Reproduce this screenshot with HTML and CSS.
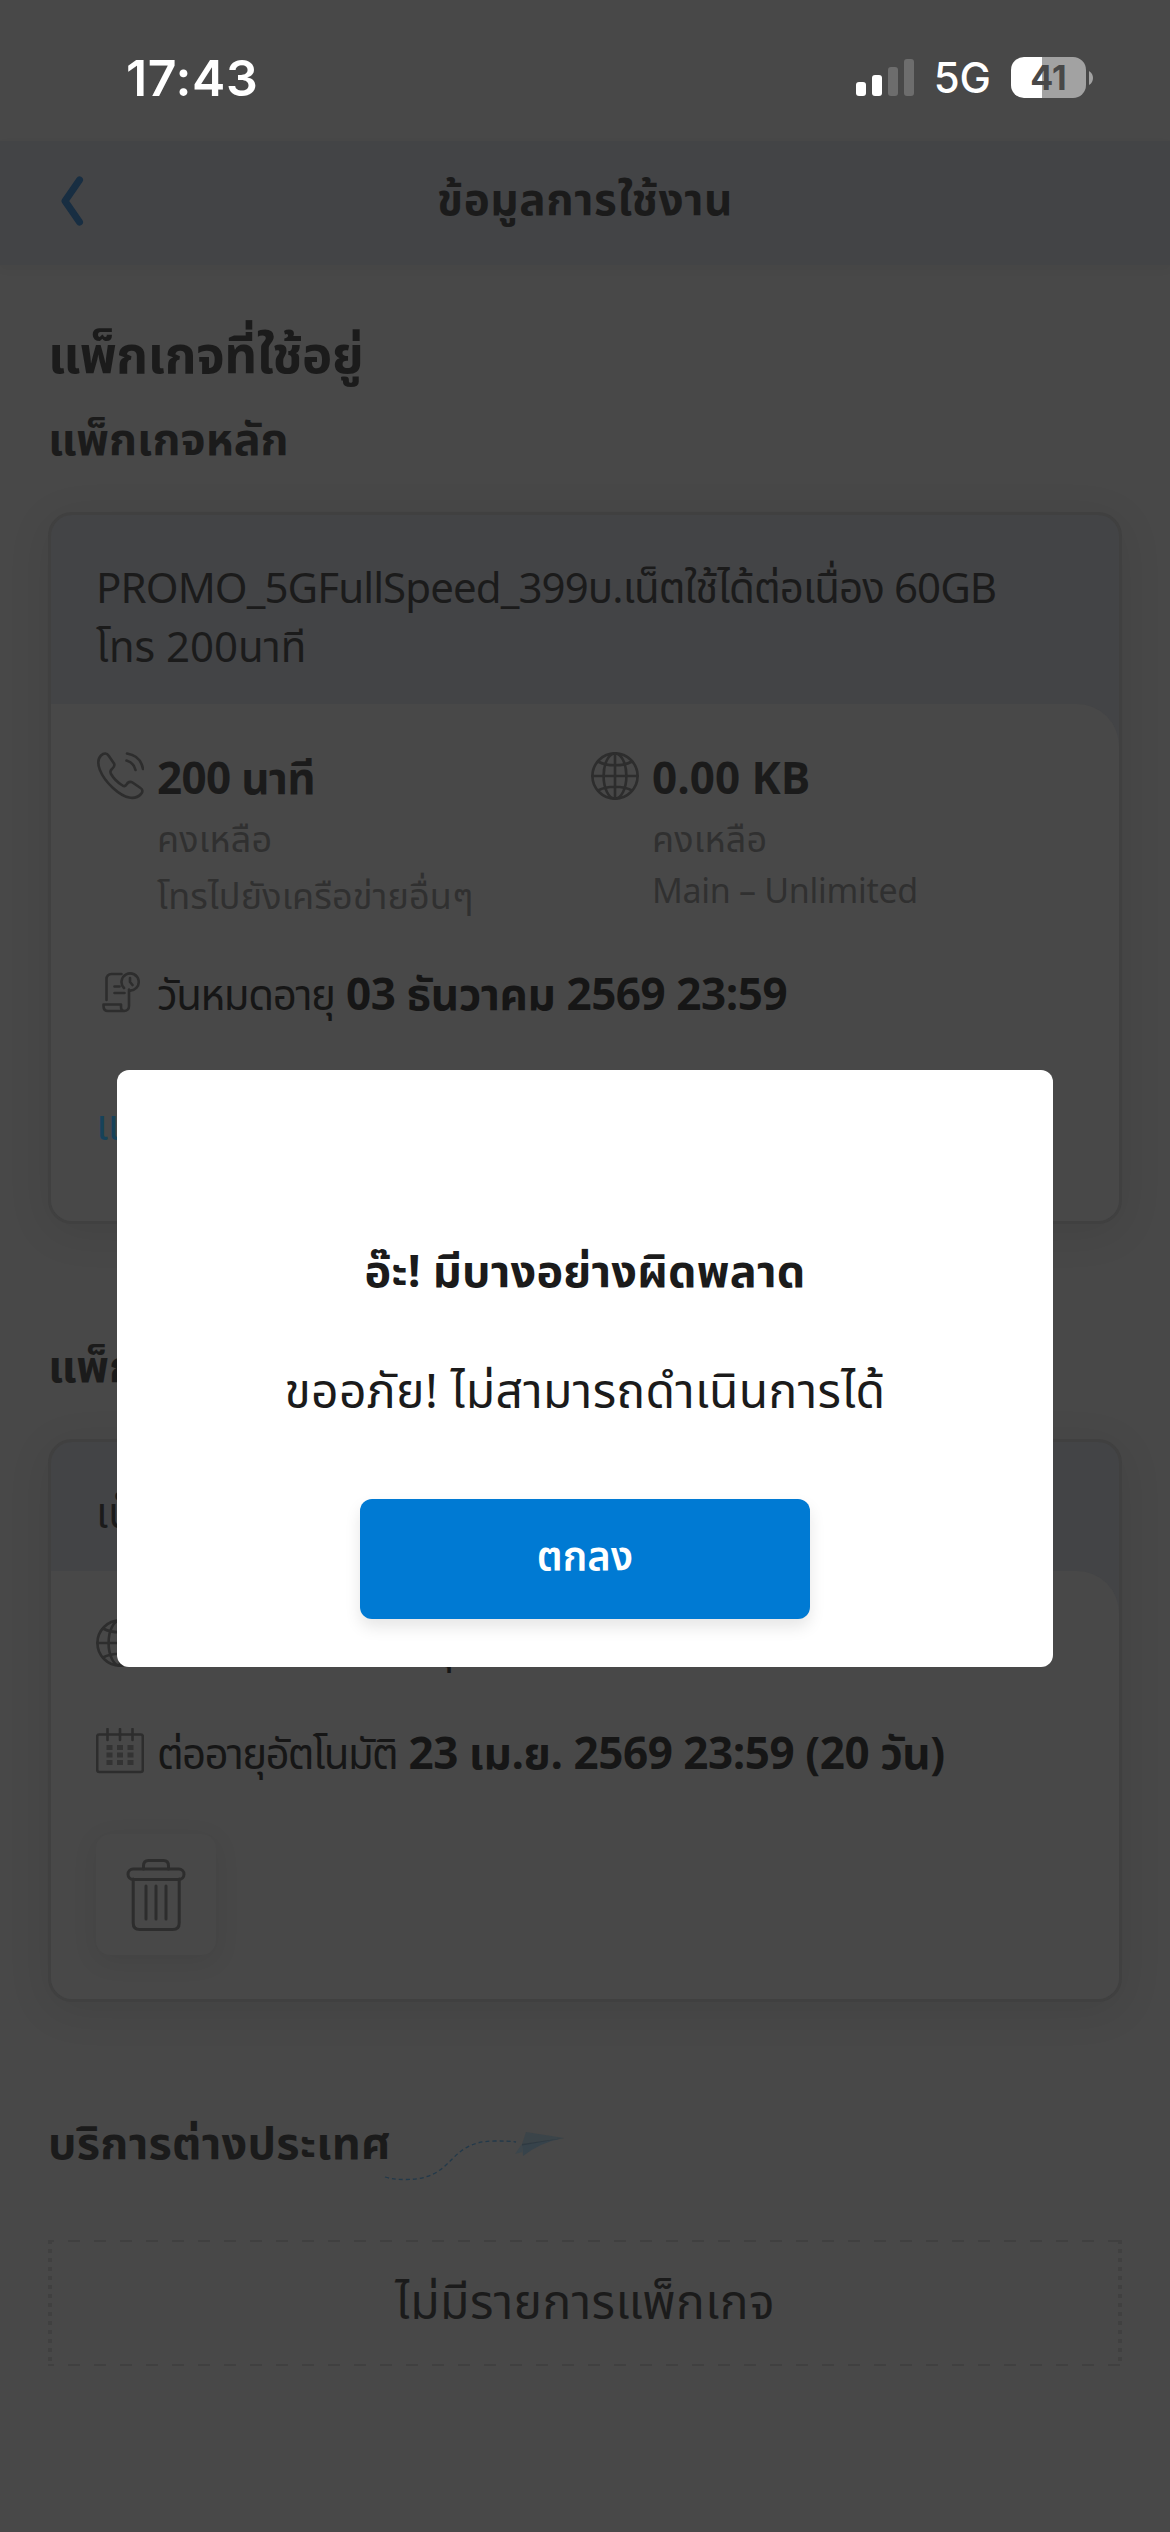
FILE: index.html
```html
<!DOCTYPE html>
<html lang="th">
<head>
<meta charset="utf-8">
<title>ข้อมูลการใช้งาน</title>
<link rel="stylesheet" href="styles.css">
</head>
<body>
<svg class="defs" aria-hidden="true">
  <symbol id="globe" viewBox="0 0 48 48">
    <circle cx="24" cy="24" r="22.6"/><ellipse cx="24" cy="24" rx="11.4" ry="22.6"/>
    <path d="M24 1.4v45.2M1.4 24h45.2M7 9.500c4.500 2.500 10 3.700 17 3.700s12.500-1.200 17-3.700M7 38.500c4.500-2.500 10-3.700 17-3.700s12.500 1.200 17 3.700"/>
  </symbol>
</svg>
<div class="screen">
  <div class="status">
    <span class="time">17:43</span>
    <div class="status-right">
      <svg class="signal" viewBox="0 0 58 37"><rect y="23" width="10" height="14" rx="3" fill="#fff"/><rect x="16" y="16" width="10" height="21" rx="3" fill="#fff"/><rect x="32" y="8" width="10" height="29" rx="3" fill="#6d6d6d"/><rect x="48" width="10" height="37" rx="3" fill="#6d6d6d"/></svg>
      <span class="net">5G</span>
      <span class="battery"><span class="level">41</span></span>
      <svg class="cap" viewBox="0 0 4 14"><path d="M0 0q4 2.500 4 7t-4 7z" fill="#a2a2a2"/></svg>
    </div>
  </div>
  <header class="bar">
    <svg class="back" viewBox="0 0 24 50"><path d="M19.500 4 5 25l14.500 21"/></svg>
    <h1 class="bar-title">ข้อมูลการใช้งาน</h1>
  </header>
  <main class="content">
    <h2 class="page-title">แพ็กเกจที่ใช้อยู่</h2>
    <h3 class="section-title">แพ็กเกจหลัก</h3>
    <section class="card main-card">
      <div class="card-head"><p class="card-name"><span class="plan">PROMO_5GFullSpeed_399บ.เน็ตใช้ได้ต่อเนื่อง 60GB</span><br>โทร 200นาที</p></div>
      <div class="card-body">
        <div class="quotas">
          <div class="quota">
            <svg class="icon" viewBox="0 0 48 48"><path d="M5 3.500C8 .5 11 1 12.500 3.500l5.500 8c1.500 2.500-.5 4-2.500 6-1.500 1.500-1.500 2.500-.5 4.500 3 5 6.500 8.500 11.500 11.500 1.500 1 3 .5 4-1 1.500-2.500 3.500-3.500 6-2l8 5.500c2.500 1.500 2.500 4 .5 6-6 6.500-16 5-28-6C4.500 24.500-1.500 10 5 3.500z"/><path d="M30.500 8.500c5 1.500 8 4.500 9 9.500M31 1.500C40 3 45.500 8.500 47 17"/></svg>
            <div class="quota-text"><p class="amount">200 นาที</p><p class="note">คงเหลือ</p><p class="note">โทรไปยังเครือข่ายอื่นๆ</p></div>
          </div>
          <div class="quota">
            <svg class="icon"><use href="#globe"/></svg>
            <div class="quota-text"><p class="amount data">0.00 KB</p><p class="note">คงเหลือ</p><p class="note latin">Main – Unlimited</p></div>
          </div>
        </div>
        <div class="info expiry">
          <svg class="icon" viewBox="0 0 48 48"><path d="M10.500 28V7c0-3 2-5 5-5h10M18.500 14.500h5M18.500 21h10M33 17.500V34c0 3-2 5-5 5H12c-3 0-4.500-2-4.500-5v-1.500h17.500V35c0 2.500 1.500 4 3.500 4M28 16a8.600 8.600 0 1 1 5 2.500M34 6v4l2.500 3"/></svg>
          <p class="line"><span class="label">วันหมดอายุ</span> <b>03 ธันวาคม 2569 23:59</b></p>
        </div>
        <a class="link" href="#">แบ่งปัน</a>
      </div>
    </section>
    <h3 class="section-title extra">แพ็กเกจเสริม</h3>
    <section class="card extra-card">
      <div class="card-head"><p class="card-name">เน็ตเสริม</p></div>
      <div class="card-body">
        <div class="info usage"><svg class="icon"><use href="#globe"/></svg><p class="line">เหลือ วันหมดอายุ</p></div>
        <div class="info renew">
          <svg class="icon" viewBox="0 0 48 48"><rect x="1.200" y="6.500" width="45.600" height="37.500" rx="2"/><path d="M11.500 1v11M24 1v11M36.500 1v11"/><path class="dots" d="M10.500 19.500h6M21 19.500h6M31.500 19.500h6M10.500 27h6M21 27h6M31.500 27h6M10.500 34.500h6M21 34.500h6M31.500 34.500h6"/></svg>
          <p class="line"><span class="label tight">ต่ออายุอัตโนมัติ</span> <b>23 เม.ย. 2569 23:59 (20 วัน)</b></p>
        </div>
        <button class="trash" aria-label="ลบ"><svg viewBox="0 0 60 74"><path d="M17.500 11V8q0-5.500 5-5.500h15q5 0 5 5.500v3M7.200 21v44q0 6.500 6.500 6.500h33q6.500 0 6.500-6.500V21M20 28v33M30 28v33M40 28v33"/><rect x="2" y="11" width="56" height="10.500" rx="5.200"/></svg></button>
      </div>
    </section>
    <div class="abroad">
      <h3 class="section-title">บริการต่างประเทศ</h3>
      <svg class="plane" viewBox="0 0 182 49"><path class="trail" d="M0 47c7 2 12 2.500 20 2.500C72 50 60 11 110 11c8 0 15 0 21 1"/><path d="M141 2l38 6-42 6z" fill="#3b4449"/><path d="M137 14l42-6q-23 4-41 18z" fill="#37434b"/><path d="M137 14l-7 10 7-2z" fill="#3c464c"/><path d="M137 14l42-6-42 7.500z" fill="#2f3a42"/></svg>
    </div>
    <div class="empty">ไม่มีรายการแพ็กเกจ</div>
  </main>
  <div class="dialog" role="dialog">
    <h2 class="dialog-title">อ๊ะ! มีบางอย่างผิดพลาด</h2>
    <p class="dialog-text">ขออภัย! ไม่สามารถดำเนินการได้</p>
    <button class="ok">ตกลง</button>
  </div>
</div>
</body>
</html>
```
FILE: styles.css
```css
*{box-sizing:border-box}
body,h1,h2,h3,p{margin:0}
body{background:#484848;color:#1b1b1b;font-family:"Noto Sans Thai","Noto Sans",sans-serif}
.defs{position:absolute;width:0;height:0}
.screen{position:relative;width:1170px;height:2532px;overflow:hidden;background:#484848}
svg{fill:none;display:block;flex:none}
.status{height:141px;padding:46px 77px 0 126px;display:flex;justify-content:space-between;color:#fff;font-family:Inter,sans-serif}
.time{font-size:50px;font-weight:600;line-height:64px;letter-spacing:.6px}
.status-right{display:flex;align-items:flex-start}
.signal{width:58px;height:37px;margin-top:13px}
.net{font-size:42px;font-weight:500;line-height:64px;margin-left:20px}
.battery{width:75px;height:41px;margin:11px 0 0 20px;border-radius:13px;background:linear-gradient(90deg,#fff 31px,#a2a2a2 31px);color:#484848;text-align:center}
.level{font-size:34px;font-weight:700;line-height:41px;display:block}
.cap{width:4px;height:14px;margin:25px 0 0 3px}
.bar{position:relative;height:124px;background:#434446;display:flex;justify-content:center;box-shadow:0 4px 10px rgba(0,0,0,.04)}
.back{position:absolute;left:60px;top:35px;width:24px;height:50px;stroke:#182e42;stroke-width:7;stroke-linecap:round;stroke-linejoin:round}
.bar-title{font-size:44px;font-weight:700;line-height:66px;margin-top:28px;letter-spacing:.6px}
.content{padding:0 48px}
.page-title{font-size:51px;font-weight:700;line-height:76px;margin-top:55px;letter-spacing:-.4px}
.section-title{font-size:45px;font-weight:700;line-height:68px;margin-top:11px;white-space:nowrap}
.card{height:712px;margin-top:37px;border:3px solid #404040;border-radius:24px;box-shadow:0 8px 44px rgba(0,0,0,.09);overflow:hidden;background:#434446}
.card-head{height:189px;padding:46px 45px 0}
.card-name{font-size:42px;line-height:59px;white-space:nowrap}
.plan{letter-spacing:-.9px}
.card-body{height:520px;background:#484848;border-radius:0 42px 0 0;padding:48px 45px 0}
.quotas{display:flex}
.quota{display:flex;flex:none;width:495px;gap:13px}
.icon{width:48px;height:48px;stroke:#2d2d2d;stroke-width:2.6;stroke-linecap:round;stroke-linejoin:round}
.dots{stroke-width:5;stroke-linecap:butt;stroke:#333}
.amount{font-size:44px;font-weight:700;line-height:58px;letter-spacing:-.7px;white-space:nowrap}
.data{letter-spacing:0}
.note{font-size:36px;line-height:57px;color:#303030;letter-spacing:.15px;white-space:nowrap}
.amount+.note{margin-top:3px}
.latin{font-size:34px;line-height:45px;letter-spacing:-.3px}
.info{display:flex;gap:13px}
.line{font-size:44px;line-height:64px;color:#161616;white-space:nowrap}
.line b{font-weight:700;letter-spacing:-.45px}
.label{font-size:42px;letter-spacing:-1.4px}
.tight{letter-spacing:-1.7px}
.expiry{margin-top:38px}
.expiry .icon{margin-top:7px}
.link{display:block;font-size:42px;line-height:60px;margin-top:68px;color:#17425a;text-decoration:none}
.extra{margin-top:110px}
.extra-card{height:563px}
.extra-card .card-head{height:129px;padding-top:44px}
.extra-card .card-body{height:431px}
.usage .line{margin-top:-3px}
.renew{margin-top:44px}
.renew .icon{margin-top:4px}
.trash{display:flex;justify-content:center;align-items:center;width:120px;height:121px;margin-top:46px;border:0;border-radius:14px;background:#484848;box-shadow:0 6px 26px rgba(0,0,0,.08)}
.trash svg{width:60px;height:74px;stroke:#2d2d2d;stroke-width:3;stroke-linecap:round}
.abroad{display:flex;margin-top:98px}
.abroad .section-title{width:343px;letter-spacing:.25px}
.plane{width:182px;height:49px;margin:30px 0 0 -6px;overflow:visible}
.trail{stroke:#22394a;stroke-width:1.300;stroke-dasharray:4 3}
.empty{height:126px;margin-top:61px;text-align:center;font-size:48px;line-height:130px;letter-spacing:.4px;background:
  repeating-linear-gradient(90deg,#404040 0 6px,transparent 6px 20px,#404040 20px 26px) 0 0/100% 2px no-repeat,
  repeating-linear-gradient(90deg,#404040 0 6px,transparent 6px 20px,#404040 20px 26px) 0 100%/100% 2px no-repeat,
  repeating-linear-gradient(#404040 0 4px,transparent 4px 9px) 0 0/4px 100% no-repeat,
  repeating-linear-gradient(#404040 0 4px,transparent 4px 9px) 100% 0/4px 100% no-repeat}
.dialog{position:absolute;left:117px;top:1070px;width:936px;height:597px;border-radius:12px;background:#fff;text-align:center;color:#1b1b1b}
.dialog-title{font-size:45px;font-weight:700;line-height:66px;margin-top:170px;letter-spacing:.2px}
.dialog-text{font-size:48px;line-height:68px;margin-top:54px;letter-spacing:.3px}
.ok{width:450px;height:120px;margin-top:71px;border:0;border-radius:12px;background:#007ad3;color:#fff;font:600 40px/120px "Noto Sans Thai",sans-serif;box-shadow:0 8px 16px rgba(0,0,0,.1);padding:0}
```
